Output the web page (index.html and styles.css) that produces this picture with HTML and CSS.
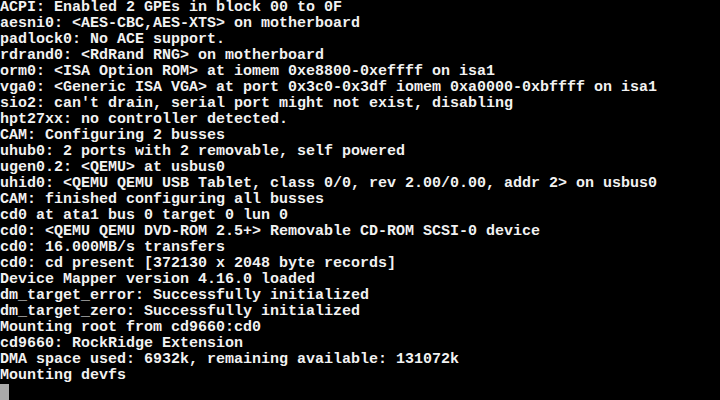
FILE: index.html
```html
<!DOCTYPE html>
<html lang="en">
<head>
    <meta charset="UTF-8">
    <title>console</title>
    <link rel="stylesheet" href="styles.css">
</head>
<body>
    <pre class="console">ACPI: Enabled 2 GPEs in block 00 to 0F
aesni0: &lt;AES-CBC,AES-XTS&gt; on motherboard
padlock0: No ACE support.
rdrand0: &lt;RdRand RNG&gt; on motherboard
orm0: &lt;ISA Option ROM&gt; at iomem 0xe8800-0xeffff on isa1
vga0: &lt;Generic ISA VGA&gt; at port 0x3c0-0x3df iomem 0xa0000-0xbffff on isa1
sio2: can't drain, serial port might not exist, disabling
hpt27xx: no controller detected.
CAM: Configuring 2 busses
uhub0: 2 ports with 2 removable, self powered
ugen0.2: &lt;QEMU&gt; at usbus0
uhid0: &lt;QEMU QEMU USB Tablet, class 0/0, rev 2.00/0.00, addr 2&gt; on usbus0
CAM: finished configuring all busses
cd0 at ata1 bus 0 target 0 lun 0
cd0: &lt;QEMU QEMU DVD-ROM 2.5+&gt; Removable CD-ROM SCSI-0 device
cd0: 16.000MB/s transfers
cd0: cd present [372130 x 2048 byte records]
Device Mapper version 4.16.0 loaded
dm_target_error: Successfully initialized
dm_target_zero: Successfully initialized
Mounting root from cd9660:cd0
cd9660: RockRidge Extension
DMA space used: 6932k, remaining available: 131072k
Mounting devfs
<span class="cursor"></span></pre>
</body>
</html>
```

FILE: styles.css
```css
* {
    margin: 0;
    padding: 0;
    box-sizing: border-box;
}

html, body {
    background: #000;
    width: 720px;
    height: 400px;
    overflow: hidden;
}

.console {
    font-family: 'Liberation Mono', 'DejaVu Sans Mono', monospace;
    font-weight: bold;
    font-size: 15px;
    line-height: 16px;
    color: #f2f2f2;
    white-space: pre;
}

.cursor {
    display: inline-block;
    width: 9px;
    height: 16px;
    background: #aaa;
    vertical-align: top;
}
```
